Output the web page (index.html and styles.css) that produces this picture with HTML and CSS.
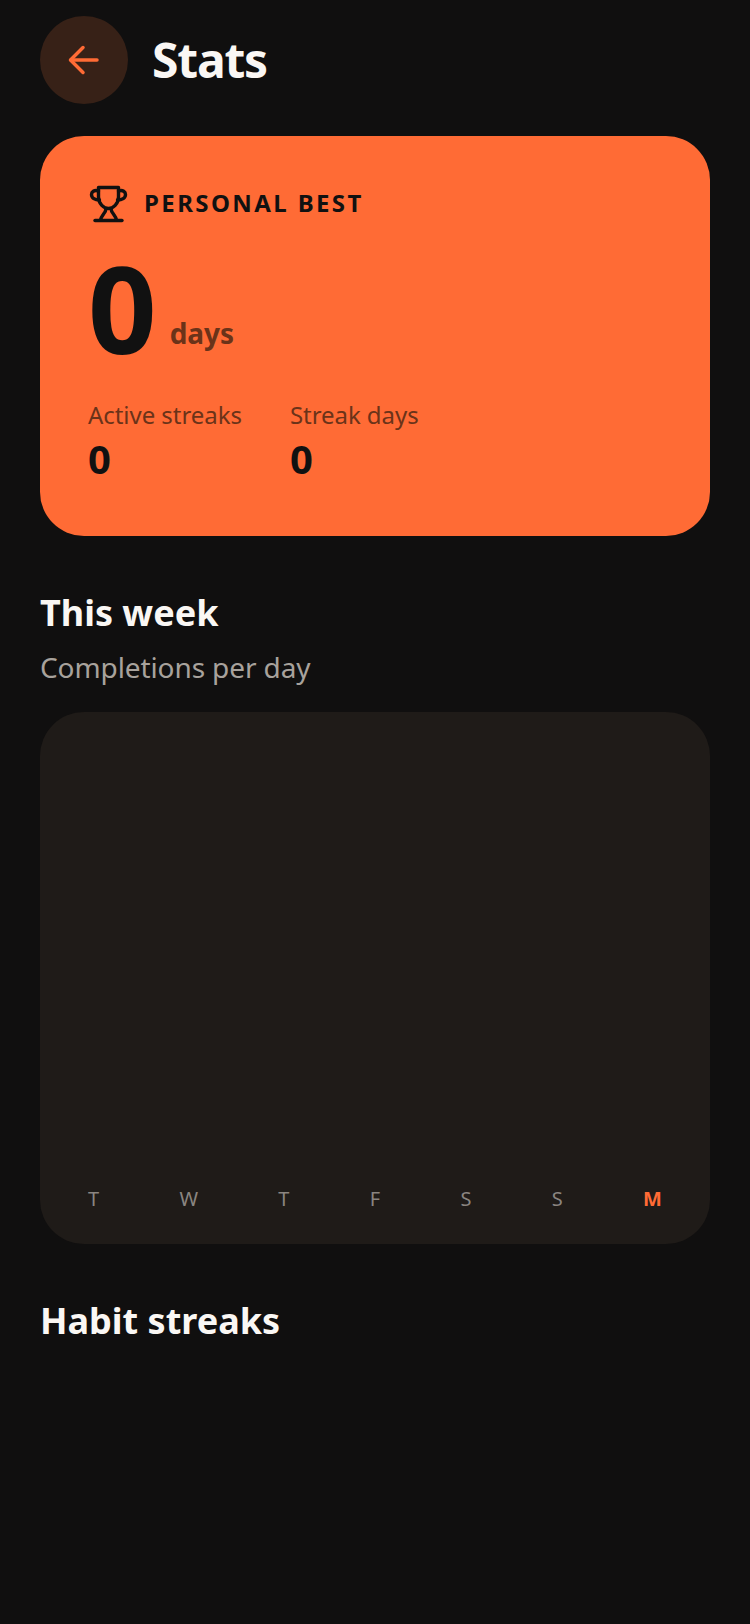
FILE: index.html
```html
<!DOCTYPE html>
<html lang="en">
<head>
  <meta charset="UTF-8" />
  <meta name="viewport" content="width=device-width, initial-scale=1.0" />
  <title>Stats</title>
  <link rel="stylesheet" href="styles.css">
</head>
<body>
  <header class="topbar">
    <button class="back" aria-label="Back">
      <svg width="36" height="36" viewBox="0 0 36 36" fill="none" stroke="#ff6b35" stroke-width="3.500" stroke-linecap="round" stroke-linejoin="round">
        <path d="M31 18H5"/>
        <path d="M17 5.500L4.500 18L17 30.500"/>
      </svg>
    </button>
    <h1 class="title">Stats</h1>
  </header>

  <section class="best">
    <div class="best-head">
      <svg class="trophy" width="40" height="40" viewBox="0 0 40 40" fill="none" stroke="#111111" stroke-width="3.400" stroke-linecap="round" stroke-linejoin="round">
        <path d="M10.500 3.500H30.500V13C30.500 20 25 24.500 20.500 24.500C16 24.500 10.500 20 10.500 13Z"/>
        <path d="M10.500 7C6 5.500 3.500 8 3.500 10.500C3.500 14 7 16 11.500 16"/>
        <path d="M30.500 7C35 5.500 37.500 8 37.500 10.500C37.500 14 34 16 29.500 16"/>
        <path d="M18 24.500C18 29 13.500 31 12.500 36"/>
        <path d="M23 24.500C23 29 27.500 31 28.500 36"/>
        <path d="M7 36.500H34"/>
      </svg>
      <span class="best-label">PERSONAL BEST</span>
    </div>
    <div class="best-value">
      <span class="big">0</span>
      <span class="unit">days</span>
    </div>
    <div class="best-stats">
      <div class="stat">
        <div class="stat-label">Active streaks</div>
        <div class="stat-num">0</div>
      </div>
      <div class="stat">
        <div class="stat-label">Streak days</div>
        <div class="stat-num">0</div>
      </div>
    </div>
  </section>

  <section class="week">
    <h2 class="section-title">This week</h2>
    <p class="section-sub">Completions per day</p>
    <div class="chart">
      <div class="days">
        <span class="day">T</span>
        <span class="day">W</span>
        <span class="day">T</span>
        <span class="day">F</span>
        <span class="day">S</span>
        <span class="day">S</span>
        <span class="day today">M</span>
      </div>
    </div>
  </section>

  <section class="streaks">
    <h2 class="section-title">Habit streaks</h2>
  </section>
</body>
</html>
```

FILE: styles.css
```css
:root {
  --bg-color: #100f0f;
  --card-color: #1f1b18;
  --accent: #ff6b35;
  --ink: #111111;
  --ink-soft: #6b3319;
}

* {
  box-sizing: border-box;
  margin: 0;
  padding: 0;
}

body {
  font-family: "Noto Sans", "Open Sans", sans-serif;
  background-color: var(--bg-color);
  color: #faf7f4;
  min-height: 100vh;
  padding: 16px 40px 0;
}

.topbar {
  display: flex;
  align-items: center;
  gap: 24px;
}

.back {
  display: flex;
  align-items: center;
  justify-content: center;
  width: 88px;
  height: 88px;
  border: none;
  border-radius: 50%;
  background-color: #372117;
}

.title {
  font-size: 48px;
  line-height: 56px;
  font-weight: 700;
  letter-spacing: -1.2px;
}

.best {
  margin-top: 32px;
  height: 400px;
  padding: 48px 48px 0;
  border-radius: 44px;
  background-color: var(--accent);
  color: var(--ink);
}

.best-head {
  display: flex;
  align-items: center;
  gap: 16px;
  height: 40px;
}

.best-label {
  padding-bottom: 4px;
  font-size: 24px;
  font-weight: 700;
  letter-spacing: 2.400px;
}

.best-value {
  display: flex;
  align-items: flex-end;
  gap: 13px;
  margin-top: 24px;
}

.big {
  font-size: 120px;
  line-height: 120px;
  font-weight: 700;
}

.unit {
  margin-bottom: 16px;
  font-size: 28px;
  font-weight: 700;
  color: var(--ink-soft);
}

.best-stats {
  display: flex;
  gap: 48px;
  margin-top: 30px;
}

.stat-label {
  font-size: 24px;
  line-height: 34px;
  letter-spacing: -0.05px;
  color: var(--ink-soft);
}

.stat-num {
  margin-top: 1px;
  font-size: 40px;
  line-height: 52px;
  font-weight: 700;
}

.week {
  margin-top: 53px;
}

.section-title {
  font-size: 36px;
  line-height: 48px;
  font-weight: 700;
}

.section-sub {
  margin-top: 11px;
  font-size: 28px;
  line-height: 38px;
  letter-spacing: -0.1px;
  color: #a8a29c;
}

.chart {
  display: flex;
  flex-direction: column;
  justify-content: flex-end;
  height: 532px;
  margin-top: 26px;
  padding: 0 48px 31px;
  border-radius: 44px;
  background-color: var(--card-color);
}

.days {
  display: flex;
  justify-content: space-between;
}

.day {
  font-size: 20px;
  line-height: 28px;
  color: #8a8580;
}

.today {
  font-weight: 700;
  color: var(--accent);
}

.streaks {
  margin-top: 53px;
}
```
